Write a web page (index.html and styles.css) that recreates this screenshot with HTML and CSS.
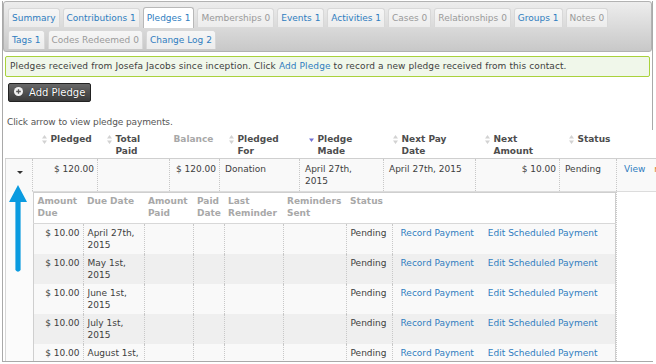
FILE: index.html
```html
<!DOCTYPE html>
<html lang="en">
<head>
    <meta charset="UTF-8">
    <meta name="viewport" content="width=device-width, initial-scale=1.0">
    <title>Pledges</title>
    <link rel="stylesheet" href="styles.css">
</head>
<body>
<div class="page">
    <div class="tabs">
        <div class="tab-row">
            <a class="tab" href="#">Summary</a>
            <a class="tab" href="#">Contributions 1</a>
            <a class="tab active" href="#">Pledges 1</a>
            <a class="tab off" href="#">Memberships 0</a>
            <a class="tab" href="#">Events 1</a>
            <a class="tab" href="#">Activities 1</a>
            <a class="tab off" href="#">Cases 0</a>
            <a class="tab off" href="#">Relationships 0</a>
            <a class="tab" href="#">Groups 1</a>
            <a class="tab off" href="#">Notes 0</a>
        </div>
        <div class="tab-row">
            <a class="tab" href="#">Tags 1</a>
            <a class="tab off" href="#">Codes Redeemed 0</a>
            <a class="tab" href="#">Change Log 2</a>
        </div>
    </div>

    <div class="message">Pledges received from Josefa Jacobs since inception. Click <a href="#">Add Pledge</a> to record a new pledge received from this contact.</div>

    <a class="button" href="#">
        <svg width="9" height="9" viewBox="0 0 9 9"><circle cx="4.5" cy="4.5" r="4.5" fill="#f2f2f2"/><path d="M4.5 2.2v4.6M2.2 4.5h4.6" stroke="#555" stroke-width="1.3"/></svg>
        <span>Add Pledge</span>
    </a>

    <p class="hint">Click arrow to view pledge payments.</p>

    <table class="pledges">
        <colgroup>
            <col class="w27"><col class="w65"><col class="w72"><col class="w50"><col class="w80">
            <col class="w84"><col class="w92"><col class="w84"><col class="w57"><col class="w64">
        </colgroup>
        <thead>
            <tr>
                <th></th>
                <th><div class="sort"><svg class="ico" width="5" height="9" viewBox="0 0 5 9"><path d="M2.5 0L5 3.6H0zM2.5 9L5 5.4H0z" fill="#d2d2d2"/></svg><span>Pledged</span></div></th>
                <th><div class="sort"><svg class="ico" width="5" height="9" viewBox="0 0 5 9"><path d="M2.5 0L5 3.6H0zM2.5 9L5 5.4H0z" fill="#d2d2d2"/></svg><span>Total<br>Paid</span></div></th>
                <th class="plain">Balance</th>
                <th><div class="sort"><svg class="ico" width="5" height="9" viewBox="0 0 5 9"><path d="M2.5 0L5 3.6H0zM2.5 9L5 5.4H0z" fill="#d2d2d2"/></svg><span>Pledged<br>For</span></div></th>
                <th><div class="sort"><svg class="ico" width="5" height="9" viewBox="0 0 5 9"><path d="M0 3.5H5L2.5 7z" fill="#7373d4"/></svg><span>Pledge<br>Made</span></div></th>
                <th><div class="sort"><svg class="ico" width="5" height="9" viewBox="0 0 5 9"><path d="M2.5 0L5 3.6H0zM2.5 9L5 5.4H0z" fill="#d2d2d2"/></svg><span>Next Pay<br>Date</span></div></th>
                <th><div class="sort"><svg class="ico" width="5" height="9" viewBox="0 0 5 9"><path d="M2.5 0L5 3.6H0zM2.5 9L5 5.4H0z" fill="#d2d2d2"/></svg><span>Next<br>Amount</span></div></th>
                <th><div class="sort"><svg class="ico" width="5" height="9" viewBox="0 0 5 9"><path d="M2.5 0L5 3.6H0zM2.5 9L5 5.4H0z" fill="#d2d2d2"/></svg><span>Status</span></div></th>
                <th></th>
            </tr>
        </thead>
        <tbody>
            <tr class="main-row">
                <td class="toggle"><svg width="6" height="3" viewBox="0 0 6 3"><path d="M0 0H6L3 3z" fill="#333"/></svg></td>
                <td class="num">$ 120.00</td>
                <td></td>
                <td class="num">$ 120.00</td>
                <td>Donation</td>
                <td>April 27th,<br>2015</td>
                <td>April 27th, 2015</td>
                <td class="num">$ 10.00</td>
                <td>Pending</td>
                <td class="links"><a href="#">View</a><a class="more" href="#">more</a></td>
            </tr>
            <tr class="detail-row">
                <td class="arrow-cell">
                    <svg class="callout" width="18" height="88" viewBox="0 0 18 88"><path d="M9 0L18 17H11.6V85Q9 88.5 6.4 85V17H0z" fill="#0a9be0"/></svg>
                </td>
                <td class="detail" colspan="8">
                    <table class="payments">
                        <colgroup>
                            <col class="w50"><col class="w61"><col class="w49"><col class="w31">
                            <col class="w59"><col class="w63"><col class="w46"><col>
                        </colgroup>
                        <thead>
                            <tr>
                                <th>Amount Due</th>
                                <th>Due Date</th>
                                <th>Amount Paid</th>
                                <th>Paid Date</th>
                                <th>Last Reminder</th>
                                <th>Reminders Sent</th>
                                <th>Status</th>
                                <th></th>
                            </tr>
                        </thead>
                        <tbody>
                            <tr>
                                <td class="num">$ 10.00</td><td>April 27th, 2015</td><td></td><td></td><td></td><td></td><td>Pending</td>
                                <td class="actions"><a href="#">Record Payment</a><a href="#">Edit Scheduled Payment</a></td>
                            </tr>
                            <tr>
                                <td class="num">$ 10.00</td><td>May 1st, 2015</td><td></td><td></td><td></td><td></td><td>Pending</td>
                                <td class="actions"><a href="#">Record Payment</a><a href="#">Edit Scheduled Payment</a></td>
                            </tr>
                            <tr>
                                <td class="num">$ 10.00</td><td>June 1st, 2015</td><td></td><td></td><td></td><td></td><td>Pending</td>
                                <td class="actions"><a href="#">Record Payment</a><a href="#">Edit Scheduled Payment</a></td>
                            </tr>
                            <tr>
                                <td class="num">$ 10.00</td><td>July 1st, 2015</td><td></td><td></td><td></td><td></td><td>Pending</td>
                                <td class="actions"><a href="#">Record Payment</a><a href="#">Edit Scheduled Payment</a></td>
                            </tr>
                            <tr>
                                <td class="num">$ 10.00</td><td>August 1st, 2015</td><td></td><td></td><td></td><td></td><td>Pending</td>
                                <td class="actions"><a href="#">Record Payment</a><a href="#">Edit Scheduled Payment</a></td>
                            </tr>
                        </tbody>
                    </table>
                </td>
                <td class="spacer"></td>
            </tr>
        </tbody>
    </table>
</div>
</body>
</html>
```

FILE: styles.css
```css
html, body {
    overflow: hidden;
}
body {
    margin: 0;
    font-family: "DejaVu Sans", Verdana, sans-serif;
    font-size: 9px;
    color: #3e3e3e;
    background: #fff;
}
a {
    color: #2f7dc0;
    text-decoration: none;
}
.page {
    margin: 1px 0 0 2px;
    width: 649px;
    height: 360px;
    border: 1px solid #a9a9a9;
    border-top: none;
    overflow-x: visible;
    overflow-y: clip;
}

/* tabs */
.tabs {
    display: flex;
    flex-direction: column;
    gap: 2px;
    padding: 6px 4px 2px;
    background: linear-gradient(#ededed, #c8c8c8);
    border: 1px solid #b2b2b2;
    border-radius: 3px;
}
.tab-row {
    display: flex;
    gap: 3px;
}
.tab {
    height: 18px;
    line-height: 18px;
    padding: 0 3px;
    background: linear-gradient(#f6f6f6, #ececec);
    border: 1px solid #d8d8d8;
    border-bottom: none;
    border-radius: 3px 3px 0 0;
    white-space: nowrap;
}
.tab.off {
    color: #9a9a9a;
}
.tab.active {
    background: #fff;
    border-color: #b8b8b8;
    height: 20px;
    margin-top: -1px;
    line-height: 20px;
}

/* message + button */
.message {
    margin: 4px 2px 0;
    padding: 3px 4px;
    line-height: 13px;
    background: #f0f7ea;
    border: 1px solid #a9d23c;
    border-radius: 2px;
    letter-spacing: 0.1px;
}
.button {
    display: inline-flex;
    align-items: center;
    gap: 6px;
    margin: 6px 0 0 5px;
    height: 17px;
    padding: 0 5px;
    background: linear-gradient(#686868, #3a3a3a);
    border: 1px solid #222;
    border-radius: 2px;
    color: #fff;
    font-size: 10px;
    text-shadow: 0 0 1px #000;
}
.button svg {
    margin-top: -2px;
}
.hint {
    margin: 14px 0 0 4px;
    line-height: 12px;
    color: #555;
    letter-spacing: -0.1px;
}

/* pledges table */
.pledges {
    margin: 2px 0 0 2px;
    border-collapse: collapse;
    table-layout: fixed;
    width: 675px;
    line-height: 12px;
}
.w27 { width: 27px; }
.w31 { width: 31px; }
.w46 { width: 46px; }
.w49 { width: 49px; }
.w50 { width: 50px; }
.w57 { width: 57px; }
.w59 { width: 59px; }
.w61 { width: 61px; }
.w63 { width: 63px; }
.w64 { width: 64px; }
.w65 { width: 65px; }
.w72 { width: 72px; }
.w80 { width: 80px; }
.w84 { width: 84px; }
.w92 { width: 92px; }

.pledges > thead th {
    padding: 3px 4px 1px 9px;
    text-align: left;
    vertical-align: top;
    color: #4d4d4d;
    background: #fff;
    border-bottom: 1px solid #cfcfcf;
}
.pledges > thead th.plain {
    padding-left: 4px;
    color: #a8a8a8;
}
.sort {
    display: flex;
    gap: 4px;
}
.ico {
    flex: none;
    margin-top: 2px;
}
.main-row td {
    padding: 4px 4px 4px 5px;
    vertical-align: top;
    background: #f9f9f9;
    border-left: 1px dotted #c8c8c8;
    border-bottom: 1px solid #dcdcdc;
}
.main-row td.num,
.payments td.num {
    text-align: right;
    padding-right: 3px;
}
.main-row td.toggle {
    border-left: 1px solid #d6d6d6;
    border-bottom: none;
}
.toggle svg {
    display: block;
    margin: 8px auto 0;
}
.main-row td.links {
    padding-left: 7px;
    white-space: nowrap;
}
.links .more {
    margin-left: 9px;
    color: #e0801c;
}

.detail-row td {
    vertical-align: top;
    background: #fbfbfb;
}
.detail-row td.arrow-cell {
    position: relative;
    border-left: 1px solid #d6d6d6;
}
.callout {
    position: absolute;
    top: -7px;
    left: 3px;
}
.detail-row td.detail {
    padding: 0;
    background: #fff;
}
.detail-row td.spacer {
    background: #fff;
    border-left: 1px dotted #c8c8c8;
}

/* payments sub table */
.payments {
    width: 100%;
    border-collapse: collapse;
    table-layout: fixed;
    border: 1px solid #cfcfcf;
}
.payments th {
    padding: 2px 4px 4px;
    text-align: left;
    vertical-align: top;
    color: #a8a8a8;
    background: #fff;
    border-bottom: 1px solid #d8d8d8;
}
.payments td {
    height: 24px;
    padding: 3px 4px;
    vertical-align: top;
    border-left: 1px dotted #c8c8c8;
}
.payments td:first-child {
    border-left: none;
}
.payments tbody tr:nth-child(odd) td {
    background: #f9f9f9;
}
.payments tbody tr:nth-child(even) td {
    background: #efefef;
}
.payments td.actions {
    white-space: nowrap;
}
.actions a {
    margin: 0 10px 0 4px;
}
```
